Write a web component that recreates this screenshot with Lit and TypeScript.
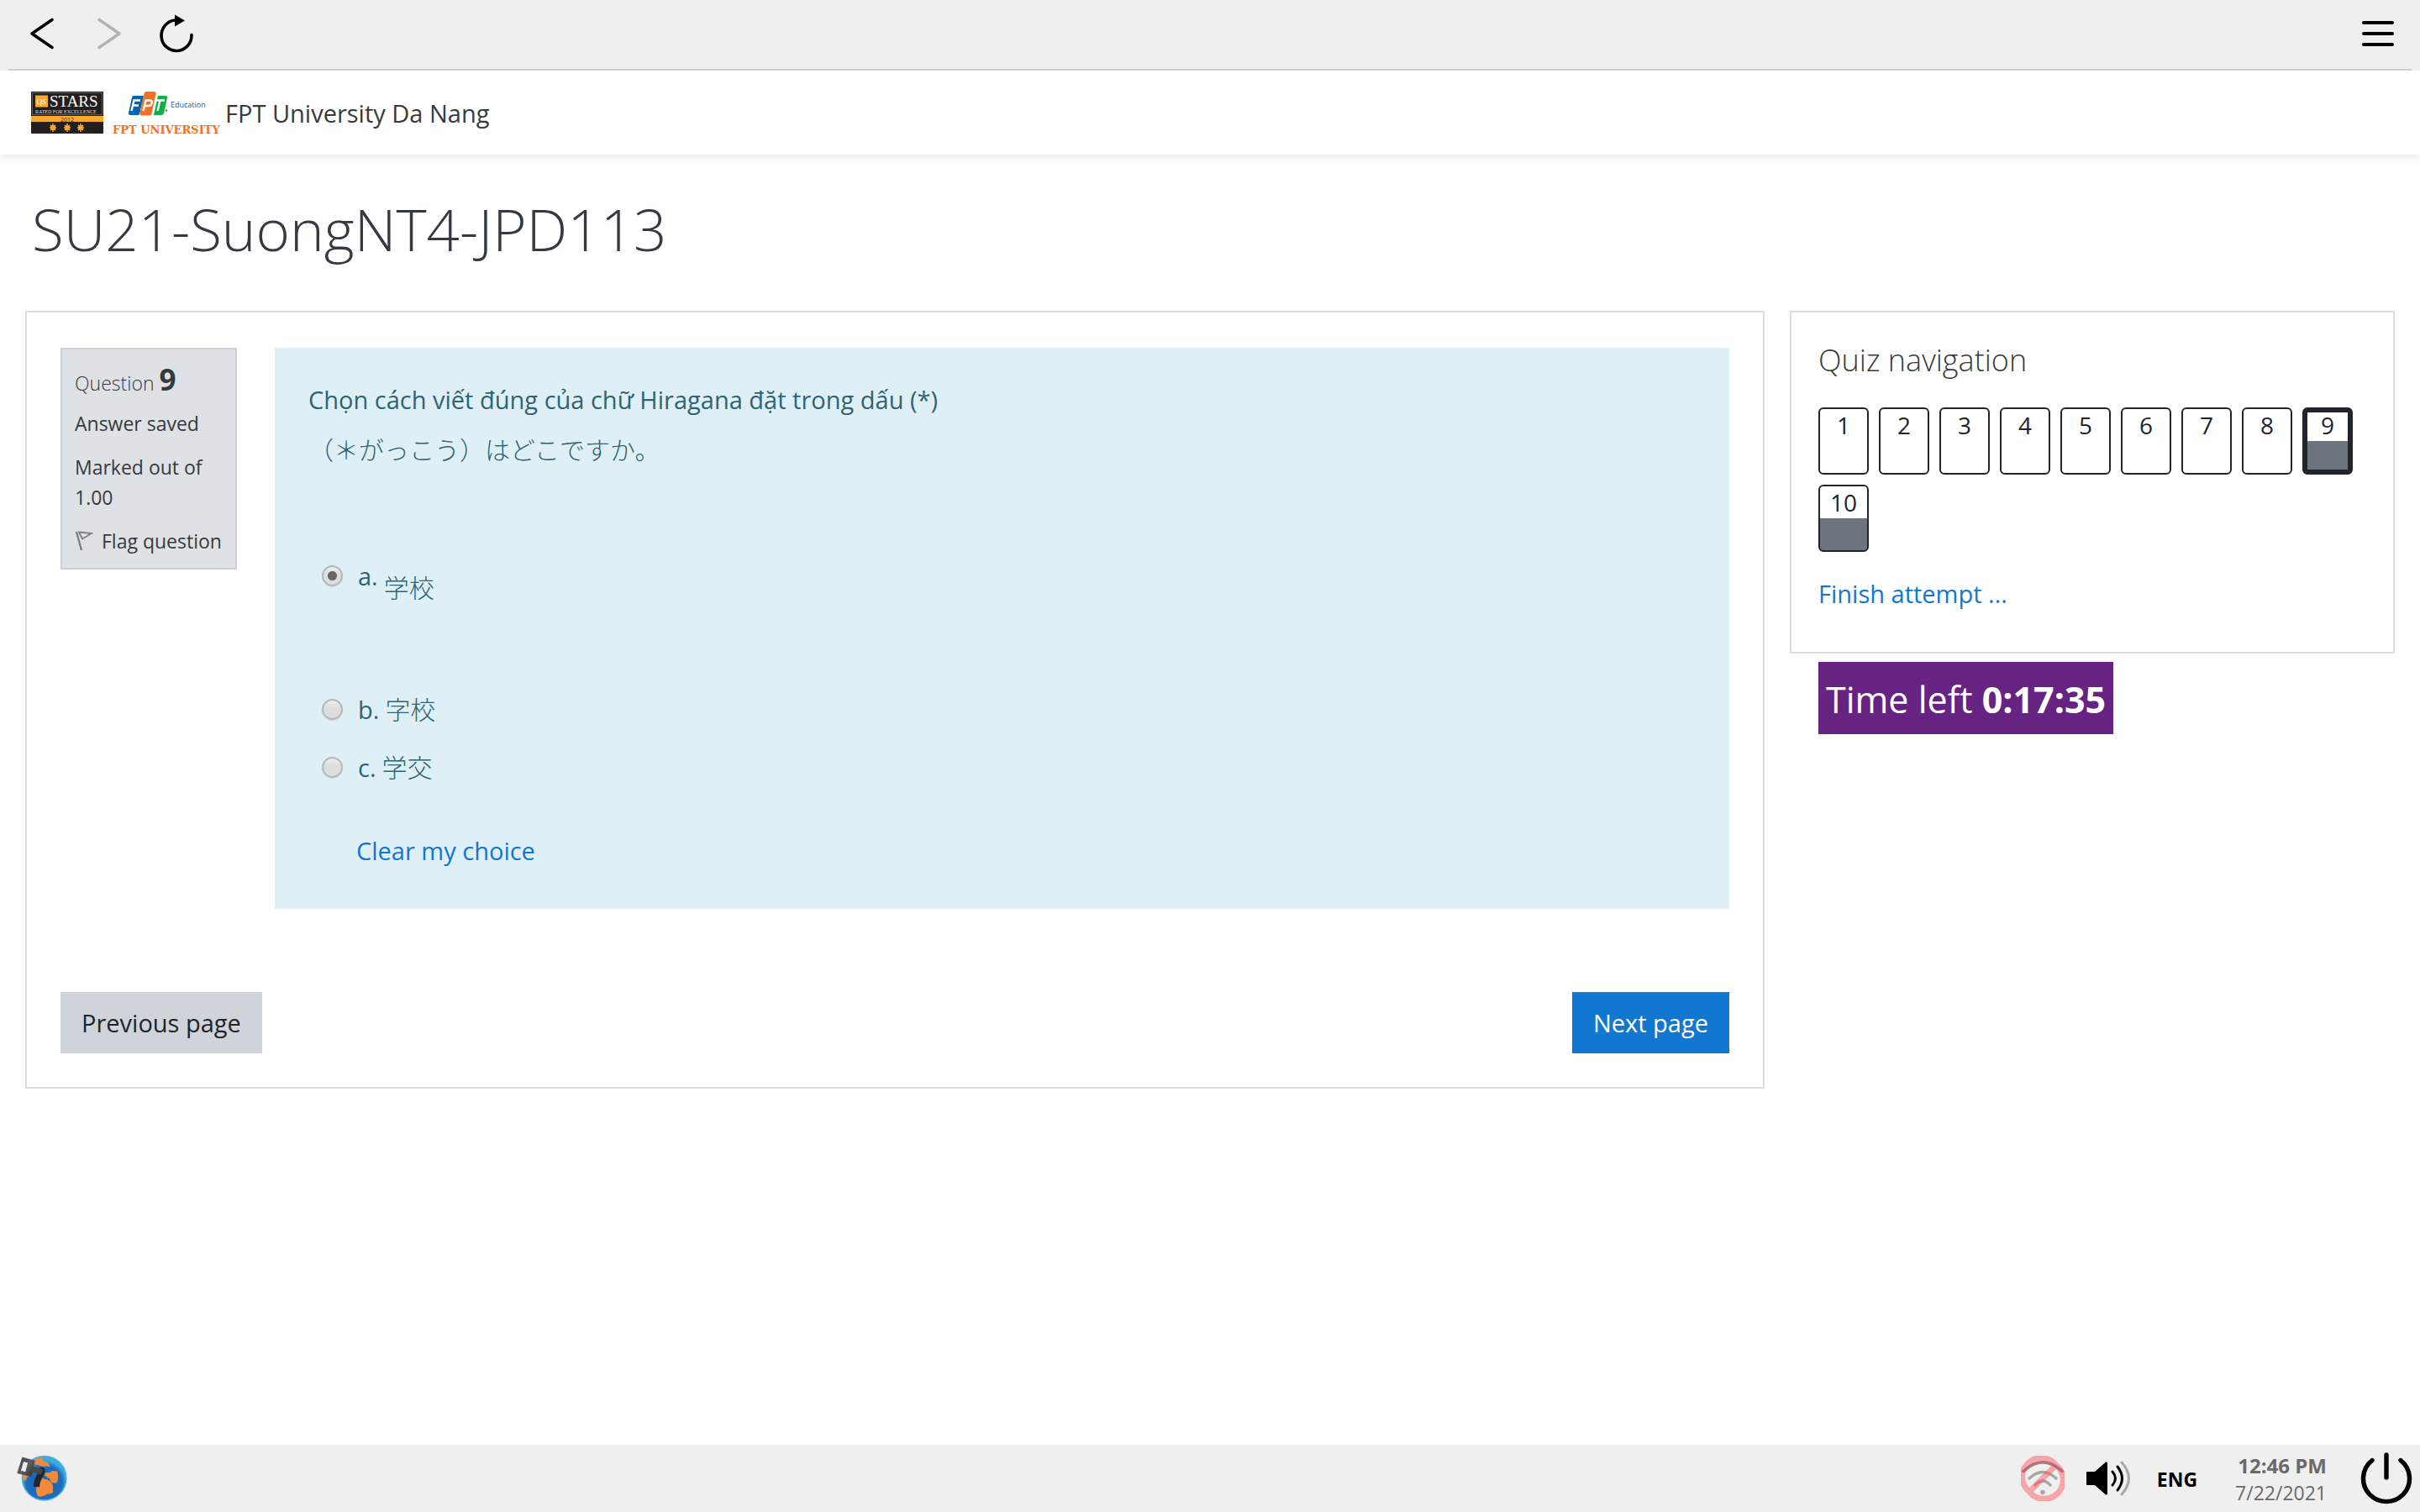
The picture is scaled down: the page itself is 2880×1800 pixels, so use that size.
import { LitElement, css, html, svg } from "lit";
import { customElement, property, state } from "lit/decorators.js";
import { classMap } from "lit/directives/class-map.js";

interface Choice {
  id: string;
  letter: string;
  text: string;
}

const CHOICES: Choice[] = [
  { id: "a", letter: "a.", text: "学校" },
  { id: "b", letter: "b.", text: "字校" },
  { id: "c", letter: "c.", text: "学交" },
];

const star = (x: number) => svg`
  <circle cx=${x} cy="53" r="3" fill="#f9a92c" />
  <path d="M${x} 48 V58 M${x - 4} 53 H${x + 4} M${x - 3} 50 L${x + 3} 56 M${x + 3} 50 L${x - 3} 56"
    stroke="#f9a92c" stroke-width="1.4" />`;

@customElement("browser-bar")
export class BrowserBar extends LitElement {
  static styles = css`
    :host {
      display: block;
      background: #efefef;
      padding: 0 10px;
    }
    .bar {
      display: flex;
      align-items: center;
      height: 82px;
      padding: 0 14px;
      border-bottom: 2px solid #d0d0d0;
    }
    .tool {
      display: block;
      margin: 0;
      padding: 0;
      border: 0;
      background: none;
    }
    .tool svg {
      display: block;
    }
    .nav {
      display: flex;
      gap: 28px;
      flex: 1;
    }
  `;

  render() {
    return html`
      <div class="bar">
        <div class="nav">
          <button class="tool" aria-label="Back">
            <svg width="52" height="52" viewBox="0 0 52 52" fill="none" stroke="#000" stroke-width="3.6"
              stroke-linecap="round" stroke-linejoin="round">
              <path d="M38 8.500 L14 25 L38 41.500" />
            </svg>
          </button>
          <button class="tool" aria-label="Forward" disabled>
            <svg width="52" height="52" viewBox="0 0 52 52" fill="none" stroke="#b3b3b3" stroke-width="3.6"
              stroke-linecap="round" stroke-linejoin="round">
              <path d="M14 8.500 L38 25 L14 41.500" />
            </svg>
          </button>
          <button class="tool" aria-label="Reload">
            <svg width="52" height="52" viewBox="0 0 52 52" fill="none">
              <path d="M44 26.500 A18 18.300 0 1 1 24.500 9" stroke="#000" stroke-width="3.6" stroke-linecap="round" />
              <path d="M24 2.500 L36 9.500 L24 16.500z" fill="#000" />
            </svg>
          </button>
        </div>
        <button class="tool" aria-label="Menu">
          <svg width="52" height="52" viewBox="0 0 52 52" stroke="#000" stroke-width="4" stroke-linecap="round">
            <path d="M9 12 H43 M9 25 H43 M9 38 H43" />
          </svg>
        </button>
      </div>
    `;
  }
}

@customElement("site-header")
export class SiteHeader extends LitElement {
  static styles = css`
    :host {
      display: flex;
      align-items: center;
      height: 100px;
      padding: 0 30px;
      background: #fff;
      box-shadow: 0 4px 8px rgba(0, 0, 0, 0.08);
    }
    .brand {
      display: flex;
      align-items: center;
      gap: 2px;
      color: #373a3c;
      font-size: 29px;
      line-height: 44px;
      text-decoration: none;
    }
    .name {
      padding-top: 2px;
    }
    .stars {
      font-family: "Liberation Serif", serif;
    }
    .edu {
      font-family: "Open Sans", sans-serif;
    }
    .slab {
      font-family: "DejaVu Serif", serif;
      font-weight: 700;
    }
  `;

  render() {
    return html`
      <a class="brand" href="#home">
        <svg width="236" height="68" viewBox="0 0 236 68" aria-hidden="true">
          <g transform="translate(0 -1)">
            <rect x="7" y="10" width="86" height="50" fill="#231f20" />
            <rect x="8.500" y="11.500" width="83" height="26" fill="none" stroke="#8a8788" stroke-width="0.6" />
            <rect x="12" y="14.500" width="15" height="14" fill="#f9a92c" />
            <text class="stars" x="13.500" y="24.500" font-size="9" fill="#fff">QS</text>
            <text class="stars" x="29" y="28" font-size="19" fill="#fff">STARS</text>
            <text class="stars" x="12" y="35.500" font-size="6" fill="#ddd">RATED FOR EXCELLENCE</text>
            <rect x="7" y="39" width="86" height="7" fill="#f9a92c" />
            <text class="edu" x="42" y="45.500" font-size="7" fill="#4a3a1c">2012</text>
            ${star(33)}${star(50)}${star(66)}
            <g>
              <path d="M129 15 H141 L136 37 Q135.500 38 134 38 H125 Q122.500 38 123 35.500 L127 17 Q127.500 15 129 15z" fill="#0464b1" />
              <path d="M158 15 H167 Q169.500 15 169 17.500 L165 36 Q164.500 38 162 38 H153z" fill="#0fae4b" />
              <path d="M144 10 H153 Q156 10 155.500 12.500 L150.500 36 Q150 38.500 147.500 38.500 H139 Q136 38.500 136.500 36 L141.500 12.500 Q142 10 144 10z" fill="#f37022" />
            </g>
            <g fill="none" stroke="#fff" stroke-width="2.4">
              <path d="M126.500 33 L129.500 20.500 H137 M128.500 26.500 H135" />
              <path d="M140.500 33 L143.500 20.500 H148.500 Q151.500 20.500 150.500 24 Q150 27 146.500 27 H143" />
              <path d="M155 20.500 H166 M160.500 20.500 L157.500 33" />
            </g>
            <circle cx="168" cy="32.500" r="1.200" fill="#0fae4b" />
            <text class="edu" x="173" y="29" font-size="9" fill="#0464b1">Education</text>
            <text class="slab" x="104" y="60" font-size="13" fill="#f37022">FPT UNIVERSITY</text>
          </g>
        </svg>
        <span class="name">FPT University Da Nang</span>
      </a>
    `;
  }
}

@customElement("quiz-question")
export class QuizQuestion extends LitElement {
  static styles = css`
    :host {
      display: block;
      border: 2px solid #dedede;
      padding: 42px 40px 40px;
      background: #fff;
    }
    .question {
      display: grid;
      grid-template-columns: 210px 1fr;
      gap: 45px;
      align-items: start;
    }
    .info {
      display: flex;
      flex-direction: column;
      gap: 16px;
      padding: 18px 14px 14px 15px;
      border: 2px solid #cad0d7;
      background: #dee2e6;
      font-size: 23px;
      line-height: 36px;
    }
    .number {
      margin: 0 0 -4px;
      font-size: 23px;
      font-weight: 300;
    }
    .number strong {
      font-size: 35px;
      font-weight: 700;
    }
    .line {
      margin: 0;
    }
    .flag {
      display: flex;
      align-items: center;
      gap: 10px;
      color: #373a3c;
      text-decoration: none;
      white-space: nowrap;
    }
    .formulation {
      padding: 32px 40px 47px;
      background: #def0f6;
      color: #2f6473;
    }
    .prompt {
      margin: 0;
      line-height: 60px;
    }
    .jp {
      font-size: 30px;
      font-weight: 300;
    }
    .answers {
      display: flex;
      flex-direction: column;
      gap: 24px;
      margin: 97px 0 0;
      padding: 0 0 0 16px;
      border: 0;
    }
    .choice {
      display: flex;
      align-items: flex-start;
      gap: 18px;
      line-height: 45px;
    }
    .choice.tall {
      padding-bottom: 90px;
    }
    .choice label {
      display: flex;
      gap: 7px;
      height: 45px;
    }
    .tall .jp {
      padding-top: 14px;
    }
    .radio {
      appearance: none;
      width: 25px;
      height: 25px;
      margin: 10px 0;
      border: 2px solid #b4b8ba;
      border-radius: 50%;
      background: linear-gradient(#eee, #dedede 40%, #dcdcdc);
      box-shadow: 0 1px 1px rgba(0, 0, 0, 0.1);
    }
    .radio:checked {
      background: radial-gradient(circle, #666 0 5px, transparent 6px), linear-gradient(#eee, #dedede 40%, #dcdcdc);
    }
    .clear {
      display: inline-block;
      margin: 54px 0 0 57px;
      line-height: 45px;
    }
    .link {
      color: #1177d1;
      text-decoration: none;
    }
    .controls {
      display: flex;
      justify-content: space-between;
      margin-top: 99px;
    }
    .button {
      height: 73px;
      padding: 0 25px;
      border: 0;
      background: #ced4da;
      color: #212529;
      font: inherit;
    }
    .button.primary {
      background: #1177d1;
      color: #fff;
    }
  `;

  @state() private selected = "a";

  render() {
    return html`
      <div class="question">
        <div class="info">
          <h3 class="number">Question <strong>9</strong></h3>
          <p class="line">Answer saved</p>
          <p class="line">Marked out of 1.00</p>
          <a class="flag" href="#flag">
            <svg width="22" height="26" viewBox="0 0 22 26" fill="none" stroke="#808080" aria-hidden="true">
              <path d="M2 2 L8 24" stroke-width="2.4" />
              <path d="M5 2.500 L20 4 L9 10.500z" stroke-width="1.8" />
            </svg>
            Flag question
          </a>
        </div>
        <div class="formulation">
          <p class="prompt">Chọn cách viết đúng của chữ Hiragana đặt trong dấu (*)</p>
          <p class="prompt"><span class="jp" lang="ja">（＊がっこう）はどこですか。</span></p>
          <div class="answers" role="radiogroup">
            ${CHOICES.map(
              (c, i) => html`
                <div class=${classMap({ choice: true, tall: i === 0 })}>
                  <input class="radio" type="radio" name="answer" id=${c.id}
                    .checked=${this.selected === c.id} @change=${() => (this.selected = c.id)} />
                  <label for=${c.id}><span>${c.letter}</span><span class="jp" lang="ja">${c.text}</span></label>
                </div>
              `
            )}
          </div>
          <a class="link clear" href="#clear">Clear my choice</a>
        </div>
      </div>
      <div class="controls">
        <button class="button">Previous page</button>
        <button class="button primary">Next page</button>
      </div>
    `;
  }
}

@customElement("quiz-navigation")
export class QuizNavigation extends LitElement {
  @property({ type: Number }) current = 9;

  static styles = css`
    :host {
      display: block;
    }
    .card {
      padding: 34px 32px 47px;
      border: 2px solid #dedede;
      background: #fff;
    }
    .title {
      margin: 0 0 33px;
      font-size: 36px;
      font-weight: 300;
      line-height: 46px;
    }
    .grid {
      display: flex;
      flex-wrap: wrap;
      gap: 12px;
    }
    .item {
      box-sizing: border-box;
      width: 60px;
      height: 80px;
      border: 2px solid #212529;
      border-radius: 6px;
      background: #fff;
      color: #212529;
      font-size: 28px;
      line-height: 38px;
      text-align: center;
      text-decoration: none;
    }
    .item.saved {
      background: linear-gradient(#fff 50%, #6c757d 50%);
    }
    .item.current {
      border-width: 6px;
      line-height: 30px;
    }
    .finish {
      display: block;
      margin-top: 27px;
      line-height: 45px;
      color: #1177d1;
      text-decoration: none;
    }
    .timer {
      display: inline-block;
      margin: 10px 0 0 34px;
      padding: 12px 9px 8px;
      background: #662382;
      color: #fff;
      font-size: 43px;
      line-height: 66px;
    }
  `;

  render() {
    const items = Array.from({ length: 10 }, (_, i) => i + 1);
    return html`
      <section class="card">
        <h2 class="title">Quiz navigation</h2>
        <nav class="grid">
          ${items.map(
            (n) => html`<a href="#q${n}"
              class=${classMap({ item: true, saved: n >= 9, current: n === this.current })}>${n}</a>`
          )}
        </nav>
        <a class="finish" href="#finish">Finish attempt ...</a>
      </section>
      <div class="timer" role="timer">Time left <strong>0:17:35</strong></div>
    `;
  }
}

@customElement("task-bar")
export class TaskBar extends LitElement {
  static styles = css`
    :host {
      display: flex;
      align-items: center;
      justify-content: space-between;
      height: 80px;
      padding: 0 9px 0 18px;
      background: #efefef;
    }
    .tray {
      display: flex;
      align-items: center;
      gap: 24px;
    }
    .tool {
      display: block;
      margin: 0;
      padding: 0;
      border: 0;
      background: none;
      font: inherit;
    }
    .tool svg {
      display: block;
    }
    .lang {
      padding: 2px 8px 0 6px;
      color: #000;
      font-size: 23px;
      font-weight: 700;
      line-height: 32px;
    }
    .clock {
      padding: 2px 16px 0 13px;
      color: #6a6a6a;
      font-size: 23px;
      line-height: 32px;
      text-align: right;
    }
    .clock strong {
      display: block;
      font-size: 24px;
    }
  `;

  render() {
    return html`
      <button class="tool" aria-label="Browser">
        <svg width="64" height="60" viewBox="54 90 192 180">
          <defs>
            <radialGradient id="sea" cx="0.5" cy="0.6" r="0.5">
              <stop offset="0" stop-color="#1c62b0" />
              <stop offset="0.8" stop-color="#1e6dbd" />
              <stop offset="1" stop-color="#3fa9de" />
            </radialGradient>
            <linearGradient id="metal" x1="0" y1="0" x2="1" y2="1">
              <stop offset="0" stop-color="#3a3c3e" />
              <stop offset="0.5" stop-color="#5c5e60" />
              <stop offset="1" stop-color="#2a2b2c" />
            </linearGradient>
          </defs>
          <circle cx="158" cy="179" r="79" fill="url(#sea)" stroke="#52b6e4" stroke-width="4" />
          <g fill="#f4883b">
            <path d="M122 116 Q134 104 153 107 L150 116 Q174 118 180 139 Q166 134 156 138 L134 132 L122 128z" />
            <path d="M82 186 Q80 170 88 164 L112 168 L98 174 L92 188z" />
            <path d="M100 132 L122 120 L120 150 L108 164z" />
            <path d="M162 160 L182 158 L183 152 L205 155 Q211 180 203 194 Q192 200 182 193 L176 178 L170 181 L168 174 L160 170z" />
            <path d="M130 212 L143 184 L148 176 Q158 184 168 184 Q188 192 190 214 Q186 220 190 228 Q186 236 168 236 Q152 248 136 244 Q126 230 130 212z" />
          </g>
          <path d="M150 152 L142 172 Q132 186 130 210" fill="none" stroke="#242526" stroke-width="22" stroke-linecap="butt" />
          <circle cx="149" cy="152" r="12" fill="#242526" />
          <path d="M112 146 L150 157" stroke="#444648" stroke-width="19" />
          <path d="M80 105 L124 117 L112 173 L62 161z M84 121 L99 124 L91 157 L75 152z"
            fill="url(#metal)" fill-rule="evenodd" stroke="#4a4c4e" stroke-width="2" stroke-linejoin="round" />
          <path d="M84 121 L99 124 L91 157 L75 152z" fill="#e8ebee" />
        </svg>
      </button>
      <div class="tray">
        <button class="tool" aria-label="Network">
          <svg width="52" height="54" viewBox="0 0 52 54" fill="none">
            <g stroke="#a8a8a8" stroke-width="3.4" stroke-linecap="round">
              <path d="M3 18.500 Q26 -3 49 18.500" />
              <path d="M10 27 Q26 12 42 27" />
              <path d="M17 35 Q26 25 35 35" />
            </g>
            <circle cx="26" cy="43.500" r="2.800" fill="#a8a8a8" />
            <g stroke="#ff4c55" stroke-opacity="0.450" stroke-width="7">
              <path d="M10.200 42.800 A22.500 22.500 0 1 1 41.800 11.200 A22.500 22.500 0 1 1 10.200 42.800 L41.800 11.200" />
            </g>
            <path d="M3 18.500 Q26 -3 49 18.500" stroke="#a85f62" stroke-opacity="0.600" stroke-width="3.400" stroke-linecap="round" />
          </svg>
        </button>
        <button class="tool" aria-label="Volume">
          <svg width="56" height="54" viewBox="0 0 56 54" fill="none" stroke-width="3" stroke-linecap="round">
            <path d="M2 20 Q2 19 3 19 H12 L25 7.500 Q27 7 27 9 V45 Q27 47 25 46.500 L12 35 H3 Q2 35 2 34z" fill="#000" />
            <path d="M33 19 Q40 27 33 35" stroke="#000" />
            <path d="M39 13 Q50 27 39 41" stroke="#000" />
            <path d="M44 8 Q61 27 44 46" stroke="#a8a8a8" />
          </svg>
        </button>
        <button class="tool lang">ENG</button>
        <div class="clock"><strong>12:46 PM</strong>7/22/2021</div>
        <button class="tool" aria-label="Power">
          <svg width="62" height="62" viewBox="0 0 62 62" fill="none" stroke="#000" stroke-width="5.400" stroke-linecap="round">
            <path d="M31 3 V30" />
            <path d="M14 9.500 A27.500 27.500 0 1 0 48 9.500" />
          </svg>
        </button>
      </div>
    `;
  }
}

@customElement("app-root")
export class AppRoot extends LitElement {
  static styles = css`
    :host {
      display: flex;
      flex-direction: column;
      min-height: 100vh;
      background: #fff;
      color: #373a3c;
      font-family: "Open Sans", "Noto Sans", "Noto Sans CJK JP", sans-serif;
      font-size: 29px;
    }
    .page {
      flex: 1;
      padding: 43px 30px 0;
    }
    .heading {
      margin: 0 8px 53px;
      color: #343a40;
      font-size: 69px;
      font-weight: 300;
      line-height: 90px;
    }
    .columns {
      display: grid;
      grid-template-columns: 23fr 8fr;
      gap: 30px;
      align-items: start;
    }
  `;

  render() {
    return html`
      <browser-bar></browser-bar>
      <site-header></site-header>
      <main class="page">
        <h1 class="heading">SU21-SuongNT4-JPD113</h1>
        <div class="columns">
          <quiz-question></quiz-question>
          <quiz-navigation></quiz-navigation>
        </div>
      </main>
      <task-bar></task-bar>
    `;
  }
}
